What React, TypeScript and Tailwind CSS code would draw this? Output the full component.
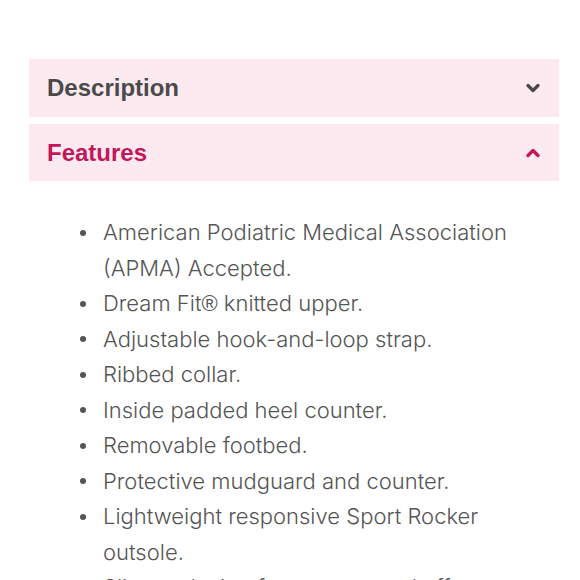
import { ChevronDown, ChevronUp } from 'lucide-react';

const FEATURES = [
  'American Podiatric Medical Association (APMA) Accepted.',
  'Dream Fit® knitted upper.',
  'Adjustable hook-and-loop strap.',
  'Ribbed collar.',
  'Inside padded heel counter.',
  'Removable footbed.',
  'Protective mudguard and counter.',
  'Lightweight responsive Sport Rocker outsole.',
  'Slip-on design for easy on and off.',
];

// Inter draws ® as a superscript; the reference shows it full size
function FeatureText({ text }: { text: string }) {
  const parts = text.split('®');
  return (
    <span>
      {parts.map((p, i) => (
        <span key={i}>
          {p}
          {i < parts.length - 1 && <span className="font-['Liberation_Sans',sans-serif]">®</span>}
        </span>
      ))}
    </span>
  );
}

export default function App() {
  return (
    <div className="w-[580px] h-[580px] overflow-hidden bg-white pt-[59px] pl-[29px] pr-[21px]">
      {/* accordion headers */}
      <div className="flex flex-col gap-[7px]">
        <div className="h-[58px] bg-[#fdeaf1] flex items-center justify-between pl-[18px] pr-[16px]">
          <span className="text-[24px] font-bold text-[#4a4a4a] font-['Liberation_Sans',sans-serif]">
            Description
          </span>
          <ChevronDown className="w-[20px] h-[20px] text-[#4a4a4a]" strokeWidth={4} />
        </div>
        <div className="h-[57px] bg-[#fdeaf1] flex items-center justify-between pl-[18px] pr-[16px]">
          <span className="text-[24px] font-bold text-[#c2185b] font-['Liberation_Sans',sans-serif]">
            Features
          </span>
          <ChevronUp className="w-[20px] h-[20px] text-[#c2185b]" strokeWidth={4} />
        </div>
      </div>

      {/* feature list */}
      <ul className="mt-[34px] pl-[50px] pr-[36px] text-[#555555] text-[22px] leading-[35.5px] font-light font-['Inter',sans-serif]">
        {FEATURES.map((f) => (
          <li key={f} className="flex">
            <span className="w-[24px] shrink-0 h-[35.5px] flex items-center">
              <span className="w-[6px] h-[6px] rounded-full bg-[#555555] ml-[1px]" />
            </span>
            <FeatureText text={f} />
          </li>
        ))}
      </ul>
    </div>
  );
}
